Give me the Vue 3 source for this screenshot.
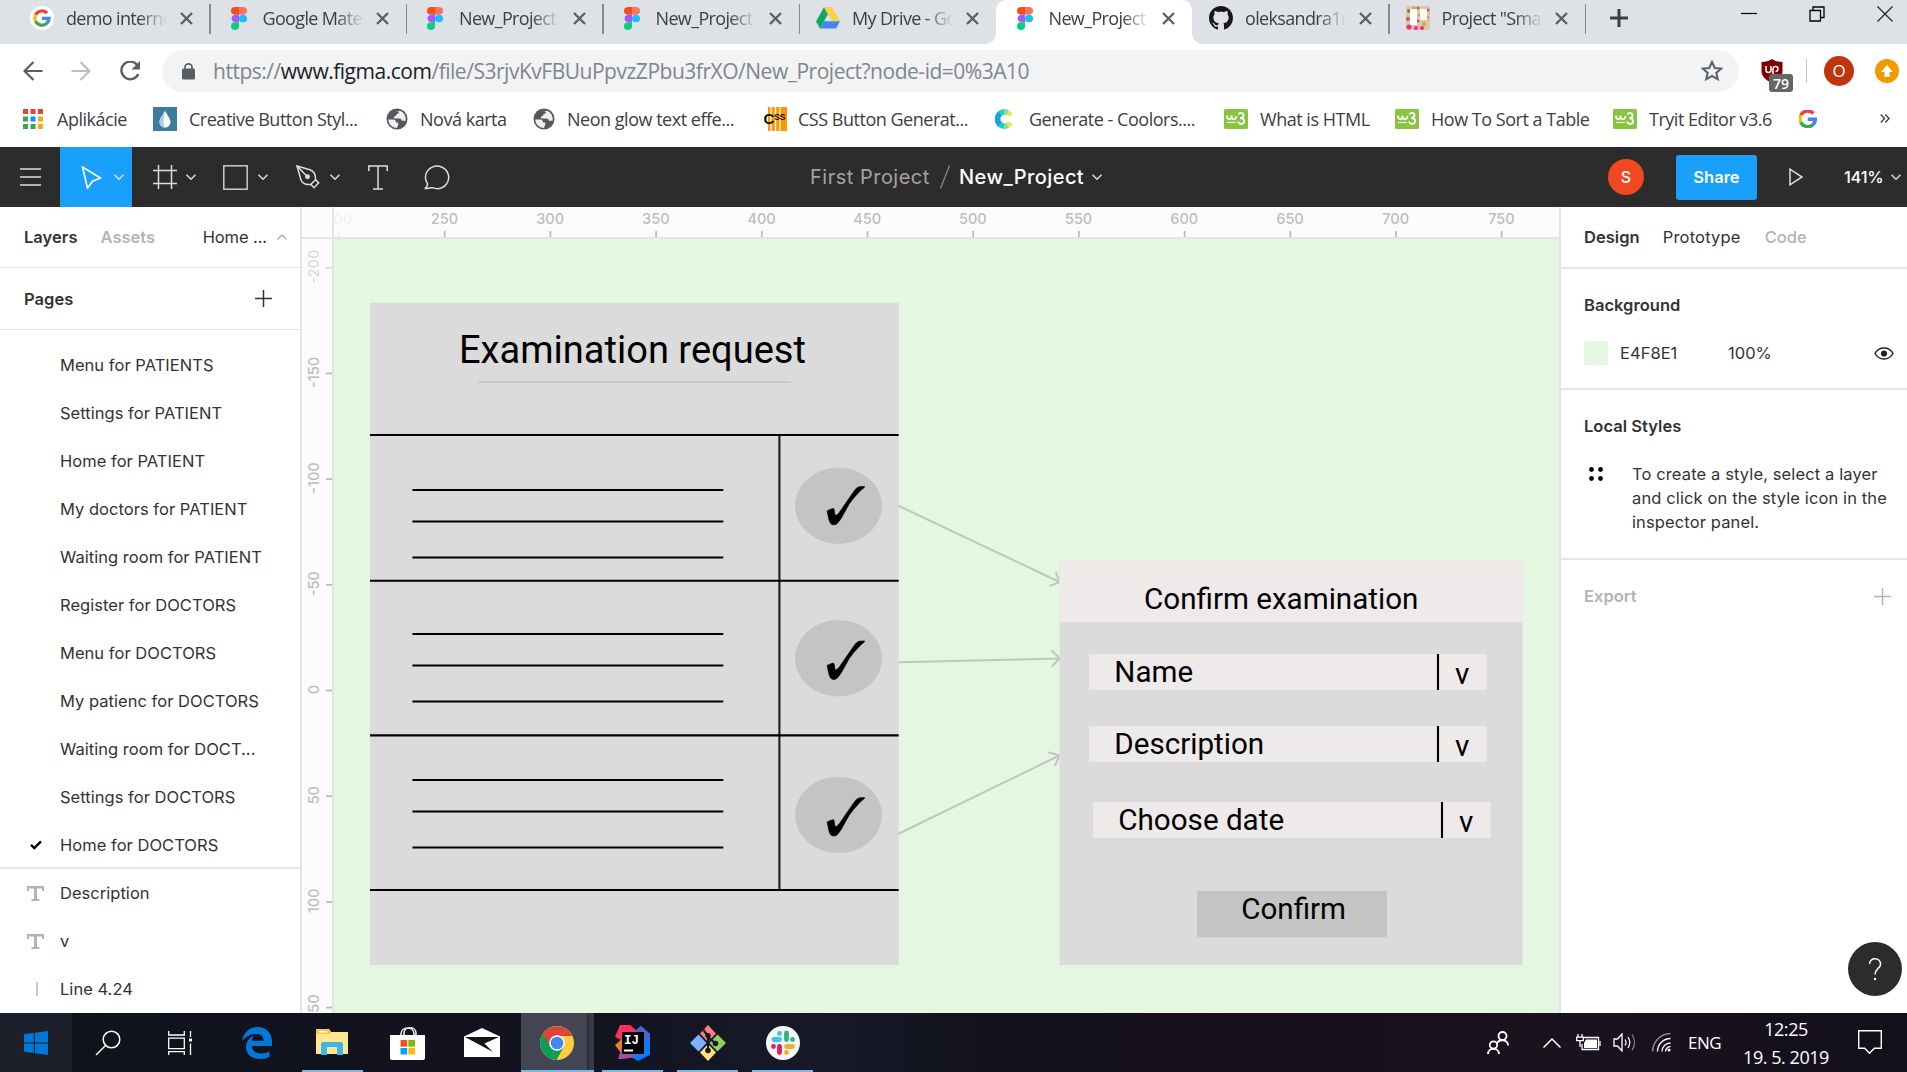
<script setup>
const tabs = [
  { icon: 'google', title: 'demo internetu' },
  { icon: 'figma', title: 'Google Material' },
  { icon: 'figma', title: 'New_Project – F' },
  { icon: 'figma', title: 'New_Project – F' },
  { icon: 'drive', title: 'My Drive - Goo' },
  { icon: 'figma', title: 'New_Project – F', active: true },
  { icon: 'github', title: 'oleksandra1na' },
  { icon: 'trello', title: 'Project "Smart' },
]

const bookmarks = [
  { icon: 'apps', label: 'Aplikácie', width: 130, gap: 34 },
  { icon: 'drop', label: 'Creative Button Styl...', width: 233, gap: 36 },
  { icon: 'globe', label: 'Nová karta', width: 147, gap: 34 },
  { icon: 'globe', label: 'Neon glow text effe...', width: 231, gap: 34 },
  { icon: 'css', label: 'CSS Button Generat...', width: 231, gap: 34 },
  { icon: 'coolors', label: 'Generate - Coolors....', width: 229, gap: 34 },
  { icon: 'w3', label: 'What is HTML', width: 171, gap: 36 },
  { icon: 'w3', label: 'How To Sort a Table', width: 218, gap: 36 },
  { icon: 'w3', label: 'Tryit Editor v3.6', width: 186, gap: 36 },
  { icon: 'google', label: '', width: 60, gap: 24 },
]

const pages = [
  'Menu for PATIENTS',
  'Settings for PATIENT',
  'Home for PATIENT',
  'My doctors for PATIENT',
  'Waiting room for PATIENT',
  'Register for DOCTORS',
  'Menu for DOCTORS',
  'My patienc for DOCTORS',
  'Waiting room for DOCT...',
  'Settings for DOCTORS',
  'Home for DOCTORS',
]

const layers = [
  { kind: 'text', name: 'Description' },
  { kind: 'text', name: 'v' },
  { kind: 'line', name: 'Line 4.24' },
]

const rulerStep = 105.7
const hTicks = [200, 250, 300, 350, 400, 450, 500, 550, 600, 650, 700, 750].map((value, i) => ({
  value: i === 0 ? '00' : value,
  x: 339 + i * rulerStep,
  shift: i === 0 ? 4 : -0.3,
  opacity: i === 0 ? 0.18 : 1,
}))
const vTicks = [-200, -150, -100, -50, 0, 50, 100, 150].map((value, i) => ({
  value,
  y: 267.7 + i * rulerStep,
  opacity: i === 0 ? 0.55 : 1,
}))

const requestRows = [
  { lines: [490, 521.5, 557.5], cy: 505.7 },
  { lines: [634, 665.5, 701.5], cy: 658.3 },
  { lines: [780, 811.5, 847.5], cy: 814.9 },
]
const checkOffset = [0, 2, 2]
const dividers = [435, 580.8, 735.4, 890]

const fields = [
  { label: 'Name', x: 1089, y: 654 },
  { label: 'Description', x: 1089, y: 726 },
  { label: 'Choose date', x: 1093, y: 802 },
]

const apps = ['edge', 'explorer', 'store', 'mail', 'chrome', 'idea', 'git', 'slack']
const running = ['explorer', 'chrome', 'idea', 'git', 'slack']
</script>

<template>
  <div class="screen">
    <header class="tabstrip">
      <div v-for="(tab, i) in tabs" :key="i" class="tab" :class="{ active: tab.active, plain: i === 4 }">
        <span class="favicon">
          <svg v-if="tab.icon === 'google'" width="24" height="24" viewBox="0 0 24 24">
            <circle cx="12" cy="12" r="12" fill="#fff" />
            <g fill="none" stroke-width="3.2">
              <path d="M17.2 7.2A7.2 7.2 0 0 0 5.6 8.8" stroke="#ea4335" />
              <path d="M5.6 8.7a7.2 7.2 0 0 0 0 6.6" stroke="#fbbc05" />
              <path d="M5.6 15.2a7.2 7.2 0 0 0 11.2 2.2" stroke="#34a853" />
              <path d="M16.6 17.5a7.2 7.2 0 0 0 2.5-5.1H12" stroke="#4285f4" />
            </g>
          </svg>
          <svg v-else-if="tab.icon === 'figma'" class="figma" width="16" height="23" viewBox="0 0 16 23">
            <path d="M8 0H4a4 3.85 0 0 0 0 7.7h4z" fill="#f24e1e" />
            <path d="M8 0h4a4 3.85 0 0 1 0 7.7H8z" fill="#ff7262" />
            <path d="M8 7.7H4a4 3.85 0 0 0 0 7.6h4z" fill="#a259ff" />
            <ellipse cx="12" cy="11.5" rx="4" ry="3.85" fill="#1abcfe" />
            <path d="M4 15.3h4v3.8a4 3.85 0 1 1-4-3.8z" fill="#0acf83" />
          </svg>
          <svg v-else-if="tab.icon === 'drive'" width="24" height="22" viewBox="0 0 24 22">
            <path d="M8 0L0 14.5 4 21.5 12 7.2z" fill="#11a861" />
            <path d="M8 0h8l8 14.3h-8z" fill="#ffcf48" />
            <path d="M8 14.3h16l-4 7.2H4z" fill="#4285f4" />
          </svg>
          <svg v-else-if="tab.icon === 'github'" width="24" height="24" viewBox="0 0 16 16">
            <path fill="#191717" d="M8 0C3.58 0 0 3.58 0 8c0 3.54 2.29 6.53 5.47 7.59.4.07.55-.17.55-.38 0-.19-.01-.82-.01-1.49-2.01.37-2.53-.49-2.69-.94-.09-.23-.48-.94-.82-1.13-.28-.15-.68-.52-.01-.53.63-.01 1.08.58 1.23.82.72 1.21 1.87.87 2.33.66.07-.52.28-.87.51-1.07-1.78-.2-3.64-.89-3.64-3.95 0-.87.31-1.59.82-2.15-.08-.2-.36-1.02.08-2.12 0 0 .67-.21 2.2.82.64-.18 1.32-.27 2-.27s1.36.09 2 .27c1.53-1.04 2.2-.82 2.2-.82.44 1.1.16 1.92.08 2.12.51.56.82 1.27.82 2.15 0 3.07-1.87 3.75-3.65 3.95.29.25.54.73.54 1.48 0 1.07-.01 1.93-.01 2.2 0 .21.15.46.55.38A8.01 8.01 0 0 0 16 8c0-4.42-3.58-8-8-8z" />
          </svg>
          <svg v-else width="24" height="24" viewBox="0 0 24 24">
            <rect width="24" height="24" rx="3" fill="#dcc7ac" />
            <g fill="#c0603a"><circle cx="3" cy="5" r="2" /><circle cx="2" cy="13" r="2" /><circle cx="22" cy="4" r="1.6" /><circle cx="12" cy="2" r="1.5" /><circle cx="12" cy="15" r="1.5" /></g>
            <g fill="#d9a441"><circle cx="8" cy="2" r="1.7" /><circle cx="18" cy="18" r="2" /><circle cx="13" cy="9" r="1.5" /><circle cx="22" cy="11" r="1.6" /></g>
            <g fill="#ee2a8c"><circle cx="3" cy="21" r="2.5" /><circle cx="10" cy="22" r="2" /><circle cx="16" cy="22" r="2" /></g>
            <rect x="4" y="3" width="7" height="16" fill="#fff" />
            <rect x="14" y="3" width="7" height="11" fill="#fff" />
          </svg>
        </span>
        <span class="tab-title">{{ tab.title }}</span>
        <svg class="tab-close" width="13" height="13" viewBox="0 0 13 13"><path d="M1 1l11 11M12 1L1 12" stroke="#5a5e63" stroke-width="2.3" /></svg>
      </div>
      <svg class="new-tab" width="18" height="18" viewBox="0 0 18 18"><path d="M9 0v18M0 9h18" stroke="#3c4043" stroke-width="3" /></svg>
      <div class="window-buttons">
        <svg width="16" height="16" viewBox="0 0 16 16"><path d="M0 7.500h16" stroke="#000" stroke-width="1.200" /></svg>
        <svg width="16" height="16" viewBox="0 0 16 16" fill="none" stroke="#000" stroke-width="1.3"><path d="M1 4.5h10.5V15H1zM4 4.5V1h11v10.500h-3.500" /></svg>
        <svg width="16" height="16" viewBox="0 0 16 16"><path d="M0.500 0.500l15 15M15.500 0.500l-15 15" stroke="#222" stroke-width="1.200" /></svg>
      </div>
    </header>

    <div class="addressbar">
      <div class="nav-buttons">
        <svg width="20" height="20" viewBox="0 0 20 20" fill="none" stroke="#5a5e63" stroke-width="2.2"><path d="M19.500 10H2M10.500 1L1.500 10l9 9" /></svg>
        <svg width="20" height="20" viewBox="0 0 20 20" fill="none" stroke="#bcbec1" stroke-width="2.2"><path d="M0.500 10H18M9.500 1l9 9-9 9" /></svg>
        <svg width="22" height="20" viewBox="0 0 22 20"><path d="M18.300 4.200A8.800 8.800 0 1 0 19.300 13" fill="none" stroke="#5a5e63" stroke-width="2.400" /><path d="M21 0v8.500h-8.500z" fill="#5a5e63" /></svg>
      </div>
      <div class="omnibox">
        <svg width="13" height="17" viewBox="0 0 13 17"><rect y="5.500" width="13" height="11" rx="1.500" fill="#5a5e63" /><path d="M3 6.500V4.200a3.500 3.300 0 0 1 7 0v2.300" fill="none" stroke="#5a5e63" stroke-width="1.700" /></svg>
        <span class="url">https://<b>www.figma.com</b>/file/S3rjvKvFBUuPpvzZPbu3frXO/New_Project?node-id=0%3A10</span>
        <svg class="star" width="22" height="22" viewBox="0 0 22 22"><path d="M11 2l2.700 6 6.500.600-4.900 4.300 1.500 6.400L11 15.900l-5.800 3.400 1.500-6.400-4.900-4.300 6.500-.600z" fill="none" stroke="#5a5e63" stroke-width="2" /></svg>
      </div>
      <div class="extensions">
        <span class="ublock">
          <svg width="22" height="24" viewBox="0 0 22 24"><path d="M11 0c3 2.200 6 2.700 10.500 2.900v8.600c0 6-4 9.500-10.500 12.500C4.500 21 0.500 17.500 0.500 11.500V2.900C5 2.700 8 2.200 11 0z" fill="#800000" /><path d="M5 7v4a2.500 2.500 0 0 0 5 0V7M12 16V9.500a2.500 2.500 0 1 1 2.500 3" fill="none" stroke="#fff" stroke-width="1.500" /></svg>
          <span class="badge">79</span>
        </span>
        <i class="ext-sep"></i>
        <span class="profile">O</span>
        <svg class="update" width="24" height="24" viewBox="0 0 24 24"><circle cx="12" cy="12" r="12" fill="#f29900" /><path d="M12 6l6 7h-3.500v5h-5v-5H6z" fill="#fff" /></svg>
      </div>
    </div>

    <nav class="bookmarks">
      <div v-for="(b, i) in bookmarks" :key="i" class="bookmark" :style="{ width: b.width + 'px' }">
        <span class="bm-icon" :style="{ width: b.gap + 'px' }">
          <svg v-if="b.icon === 'apps'" width="20" height="20" viewBox="0 0 20 20">
            <path d="M0 0h5v5H0zM7.500 0h5v5h-5zM15 0h5v5h-5z" fill="#ea4335" />
            <path d="M0 7.500h5v5H0zM0 15h5v5H0zM7.500 15h5v5h-5z" fill="#34a853" />
            <path d="M7.500 7.500h5v5h-5z" fill="#1a8cff" />
            <path d="M15 7.500h5v5h-5zM15 15h5v5h-5z" fill="#fbab05" />
          </svg>
          <svg v-else-if="b.icon === 'drop'" width="24" height="24" viewBox="0 0 24 24">
            <rect width="24" height="24" fill="#3d7c9c" /><path d="M12 4c3 5 5.500 8 5.500 11a5.500 5.500 0 0 1-11 0c0-3 2.500-6 5.500-11z" fill="#fff" /><path d="M12 4c-3 5-5.500 8-5.500 11a5.500 5.500 0 0 0 5 5.500c-2-5-.5-9 .5-16.500z" fill="#a8cfe2" />
          </svg>
          <svg v-else-if="b.icon === 'globe'" width="22" height="22" viewBox="0 0 22 22">
            <circle cx="11" cy="11" r="10.500" fill="#55595e" />
            <path d="M2.300 11.500H7c2 0 3 1.200 3 3h2.200v2.300c0 1-1 1.200-1 2.200v1C6 20 2.500 16 2.300 11.500zM9.500 3.500h3.200c.3 1.800-.7 2.500-2.300 2.800-.2 1.500-.8 2.200-2.400 2.200v2h5.500c1.500 0 2.300 1 2.300 2.300h3.700A8.800 8.800 0 0 0 14 2.700z" fill="#fff" opacity=".9" />
          </svg>
          <svg v-else-if="b.icon === 'css'" width="23" height="24" viewBox="0 0 23 24">
            <path d="M4 0h19v24H4z" fill="#ff9800" /><path d="M7 0v24M11.500 0v24M16 0v24" stroke="#fff" stroke-width="1.300" />
            <text x="-0.500" y="17" font-family="Liberation Sans" font-weight="bold" font-size="15" fill="#111">C</text>
            <text x="10" y="12.500" font-family="Liberation Sans" font-weight="bold" font-size="9" fill="#111">SS</text>
          </svg>
          <svg v-else-if="b.icon === 'coolors'" width="19" height="20" viewBox="0 0 19 20">
            <g fill="none" stroke-width="5.500"><path d="M6 16.200A7 7.200 0 0 1 6 3.800" stroke="#12a5e8" /><path d="M5 4.600A7 7.200 0 0 1 9.500 2.800M5 15.400a7 7.200 0 0 0 4.500 1.800" stroke="#1fcfc0" /><path d="M9.300 2.800a7 7 0 0 1 3.400.9M9.300 17.200a7 7 0 0 0 3.400-.9" stroke="#7fe08a" /><path d="M12.500 3.600a7 7 0 0 1 3 2.900M12.500 16.400a7 7 0 0 0 3-2.900" stroke="#dcec55" /></g>
          </svg>
          <svg v-else-if="b.icon === 'w3'" width="24" height="20" viewBox="0 0 24 20">
            <rect width="24" height="20" rx="1.500" fill="#86c540" /><path d="M3 6.500c0 5 4.500 5 4.500 0 0 5 4.500 5 5 .5M14.500 5.500c1-2.500 5.500-2 5 1 0 2-2 2.500-3.500 2.500 2.500 0 4 1 4 3.300 0 3.500-5 3.500-6 .2" fill="none" stroke="#fff" stroke-width="1.800" /><path d="M3 13.500h9" stroke="#e6f5d6" stroke-width="1.200" />
          </svg>
          <svg v-else width="18" height="18" viewBox="4 4 16.500 16.500">
            <g fill="none" stroke-width="3.200"><path d="M17.200 7.200A7.200 7.200 0 0 0 5.600 8.800" stroke="#ea4335" /><path d="M5.600 8.700a7.200 7.200 0 0 0 0 6.600" stroke="#fbbc05" /><path d="M5.600 15.200a7.200 7.200 0 0 0 11.200 2.200" stroke="#34a853" /><path d="M16.600 17.500a7.200 7.200 0 0 0 2.500-5.100H12" stroke="#4285f4" /></g>
          </svg>
        </span>
        <span>{{ b.label }}</span>
      </div>
      <svg class="more" width="10" height="9" viewBox="0 0 10 9"><path d="M0.800 0.500l3.700 4-3.700 4M5.300 0.500l3.700 4-3.700 4" fill="none" stroke="#44484c" stroke-width="1.500" /></svg>
    </nav>

    <div class="toolbar">
      <span class="tool menu"><svg width="21" height="18" viewBox="0 0 21 18"><path d="M0 1h21M0 9h21M0 17h21" stroke="#ddd" stroke-width="1.400" /></svg></span>
      <span class="tool move">
        <svg class="glyph" width="21" height="23" viewBox="0 0 21 23"><path d="M1.500 1l18 11-8 3.200-5 7z" fill="none" stroke="#fff" stroke-width="1.600" /></svg>
        <svg class="chev" width="10" height="6" viewBox="0 0 10 6"><path d="M0.500 0.800L5 5.200 9.500 0.800" /></svg>
      </span>
      <span class="tool">
        <svg class="glyph" width="24" height="24" viewBox="0 0 24 24"><path d="M5.500 0v24M18.500 0v24M0 5.500h24M0 18.500h24" fill="none" stroke="#ddd" stroke-width="1.500" /></svg>
        <svg class="chev" width="10" height="6" viewBox="0 0 10 6"><path d="M0.500 0.800L5 5.200 9.500 0.800" /></svg>
      </span>
      <span class="tool narrow">
        <svg class="glyph" width="25" height="25" viewBox="0 0 25 25"><rect x=".8" y=".8" width="23.400" height="23.400" fill="none" stroke="#ccc" stroke-width="1.500" /></svg>
        <svg class="chev" width="10" height="6" viewBox="0 0 10 6"><path d="M0.500 0.800L5 5.200 9.500 0.800" /></svg>
      </span>
      <span class="tool narrow">
        <svg class="glyph pen" width="24" height="24" viewBox="0 0 24 24"><g fill="none" stroke="#ddd" stroke-width="1.500"><path d="M1 1l13 3.700c4 1.600 5.800 5 5.500 10l-4.800 4.800c-4 .4-8.200-.6-9.700-4.500z" /><path d="M1 1l9.500 9.700" /><circle cx="11.500" cy="11.700" r="1.700" fill="#ddd" /><path d="M19.300 14.600l3.400 3.200-4.600 4.900-3.200-3.200" /></g></svg>
        <svg class="chev" width="10" height="6" viewBox="0 0 10 6"><path d="M0.500 0.800L5 5.200 9.500 0.800" /></svg>
      </span>
      <span class="tool solo"><svg width="20" height="25" viewBox="0 0 20 25"><path d="M0.800 6V1h18.400v5M10 1v23M5 24h10" fill="none" stroke="#ddd" stroke-width="1.500" /></svg></span>
      <span class="tool comment"><svg width="27" height="25" viewBox="0 0 27 25"><path d="M0.800 23.700c1.800-1 2.700-2.700 2.700-4.900A11.600 11.300 0 1 1 14 23.700c-3 0-4.500-1.200-6.500-.9z" fill="none" stroke="#ddd" stroke-width="1.500" /></svg></span>
      <div class="doc-title">
        <span class="project">First Project</span>
        <svg width="10" height="24" viewBox="0 0 10 24"><path d="M9.500 0.500l-9 23" stroke="#888" stroke-width="1.300" /></svg>
        <span class="file">New_Project</span>
        <svg class="chev" width="10" height="6" viewBox="0 0 10 6"><path d="M0.500 0.800L5 5.200 9.500 0.800" /></svg>
      </div>
      <span class="avatar">S</span>
      <span class="share">Share</span>
      <svg class="play" width="14" height="18" viewBox="0 0 14 18"><path d="M1 1.200v15.600L13 9z" fill="none" stroke="#ddd" stroke-width="1.500" /></svg>
      <span class="zoom">141%</span>
      <svg class="chev" width="10" height="6" viewBox="0 0 10 6"><path d="M0.500 0.800L5 5.200 9.500 0.800" /></svg>
    </div>

    <main class="editor">
      <aside class="left">
        <div class="left-tabs">
          <strong>Layers</strong>
          <strong class="muted">Assets</strong>
          <span class="current-page">Home ...</span>
          <svg width="10" height="6" viewBox="0 0 10 6"><path d="M0.500 5.500L5 1l4.500 4.500" fill="none" stroke="#aaa" stroke-width="1.400" /></svg>
        </div>
        <div class="pages-head">
          <strong>Pages</strong>
          <svg width="17" height="17" viewBox="0 0 17 17"><path d="M8.500 0v17M0 8.500h17" stroke="#333" stroke-width="1.500" /></svg>
        </div>
        <ul class="pages">
          <li v-for="(page, i) in pages" :key="page">
            <span class="row-icon"><svg v-if="i === pages.length - 1" width="12" height="10" viewBox="0 0 12 10"><path d="M1 4.800l3.300 3.200L11 1.300" fill="none" stroke="#000" stroke-width="2.400" /></svg></span>{{ page }}
          </li>
        </ul>
        <ul class="layers">
          <li v-for="layer in layers" :key="layer.name">
            <span class="row-icon">
              <svg v-if="layer.kind === 'text'" width="17" height="15" viewBox="0 0 17 15"><path d="M0 0h17v5h-2V2.500h-5V13h2.500v2h-8v-2H7V2.500H2V5H0z" fill="#b3b3b3" /></svg>
              <svg v-else class="line-icon" width="2" height="14" viewBox="0 0 2 14"><path d="M1 0v14" stroke="#b3b3b3" stroke-width="1.400" /></svg>
            </span>{{ layer.name }}
          </li>
        </ul>
      </aside>

      <svg class="canvas" width="1257" height="806" viewBox="302 207 1257 806">
        <rect x="302" y="207" width="1257" height="806" fill="#e4f8e1" />
        <rect x="302" y="207" width="1257" height="30" fill="#fcfcfc" />
        <rect x="302" y="207" width="30" height="806" fill="#fcfcfc" />
        <path d="M302 238h1257M333 207v806" stroke="#e5e5e5" stroke-width="2" />
        <g class="ruler">
          <g v-for="t in hTicks" :key="'h' + t.x" :opacity="t.opacity">
            <path :d="`M${t.x} 231v6`" stroke="#b8b8b8" stroke-width="1.700" />
            <text :x="t.x + t.shift" y="223.500">{{ t.value }}</text>
          </g>
          <g v-for="t in vTicks" :key="'v' + t.value" :opacity="t.opacity">
            <path :d="`M326 ${t.y}h6`" stroke="#b8b8b8" stroke-width="1.700" />
            <text :transform="`translate(318.500 ${t.y - 1}) rotate(-90)`">{{ t.value }}</text>
          </g>
        </g>

        <g class="request">
          <rect x="370" y="302.700" width="528.700" height="662.300" fill="#dbdbdb" />
          <text x="459" y="362.500" font-size="38.060">Examination request</text>
          <path d="M478 382h313" stroke="#c9c9c9" stroke-width="2" />
          <path v-for="y in dividers" :key="y" :d="`M370 ${y}h528.700`" stroke="#000" stroke-width="2.100" />
          <path d="M779.400 435v454.500" stroke="#000" stroke-opacity=".87" stroke-width="2.100" />
          <g v-for="(row, i) in requestRows" :key="row.cy">
            <path v-for="y in row.lines" :key="y" :d="`M412.400 ${y}h310.900`" stroke="#000" stroke-width="2.100" />
            <ellipse cx="838.500" :cy="row.cy" rx="43.500" ry="38.200" fill="#c4c4c4" />
            <path :transform="`translate(838.500 ${row.cy + checkOffset[i]})`" stroke="#000" stroke-width=".7" d="M26-19.300L20.500-19Q17.500-18 15.500-14.500L1 6.500Q-1.500 10.300-3.200 9.500Q-4.200 8-4 5.500L-4.800 2.800L-7.500 3.400L-11.400 5.200L-9.300 14.800Q-8 18.800-6 19Q-3 19.500-1.500 18Q0.500 16 3 12L10.500-1.500Q15-8 20-13Q23-16.300 25.800-18.300Z" />
          </g>
        </g>

        <g class="arrows" fill="none" stroke="#c4c4c4" stroke-width="2.100" stroke-linecap="round">
          <path d="M899 506l160.500 76M1056 572.700l3.700 9.500-9.500 3.500" />
          <path d="M899 662.200l160.500-3.700M1052 651l7.800 7.300-7.500 7.600" />
          <path d="M899 833.500l160.500-78M1049 752.500l10.600 3-4.300 9.500" />
        </g>

        <g class="confirm">
          <rect x="1059.500" y="561.300" width="463" height="403.700" fill="#dbdbdb" />
          <rect x="1059.500" y="561.300" width="463" height="60.900" fill="#eeeae9" />
          <text x="1144" y="609.400" font-size="29.600">Confirm examination</text>
          <g v-for="f in fields" :key="f.label">
            <rect :x="f.x" :y="f.y" width="397.600" height="36" fill="#eeeae9" />
            <text :x="f.x + 25.300" :y="f.y + 27.600" font-size="29.600">{{ f.label }}</text>
            <path :d="`M${f.x + 349} ${f.y}v36`" stroke="#000" stroke-width="2.100" />
            <text :x="f.x + 366" :y="f.y + 29.600" font-size="29.600">v</text>
          </g>
          <rect x="1197" y="891" width="190" height="46.500" fill="#c4c4c4" />
          <text x="1241.200" y="918.600" font-size="29.600">Confirm</text>
        </g>
      </svg>

      <aside class="right">
        <div class="right-tabs"><strong>Design</strong><span>Prototype</span><strong class="muted code">Code</strong></div>
        <section class="background">
          <strong>Background</strong>
          <div class="fill">
            <i class="swatch"></i><span class="hex">E4F8E1</span><span>100%</span>
            <svg width="20" height="13" viewBox="0 0 20 13"><path d="M1 6.500C5-.7 15-.7 19 6.500 15 13.700 5 13.700 1 6.500z" fill="none" stroke="#222" stroke-width="1.500" /><circle cx="10" cy="6.500" r="3.100" fill="#222" /></svg>
          </div>
        </section>
        <section class="styles">
          <strong>Local Styles</strong>
          <div class="hint">
            <svg width="14" height="14" viewBox="0 0 14 14"><circle cx="2.500" cy="2.500" r="2.400" /><circle cx="11.500" cy="2.500" r="2.400" /><circle cx="2.500" cy="11.500" r="2.400" /><circle cx="11.500" cy="11.500" r="2.400" /></svg>
            <p>To create a style, select a layer<br />and click on the style icon in the<br />inspector panel.</p>
          </div>
        </section>
        <section class="export">
          <strong>Export</strong>
          <svg width="17" height="17" viewBox="0 0 17 17"><path d="M8.500 0v17M0 8.500h17" stroke="#b3b3b3" stroke-width="1.500" /></svg>
        </section>
        <span class="help"><svg width="14" height="23" viewBox="0 0 14 23"><path d="M1.500 6c0-7 11-7 11 .2 0 4.300-5.500 4.300-5.500 10.300" fill="none" stroke="#fff" stroke-width="1.500" /><circle cx="7" cy="21" r="1.200" fill="#fff" /></svg></span>
      </aside>
    </main>

    <footer class="taskbar">
      <span class="sys start"><svg width="24" height="24" viewBox="0 0 24 24"><path d="M0 3.300L9.800 2v9.500H0zM11 1.800L24 0v11.500H11zM0 12.500h9.800V22L0 20.700zM11 12.500h13V24l-13-1.800z" fill="#0078d7" /></svg></span>
      <span class="sys"><svg width="26" height="26" viewBox="0 0 26 26"><circle cx="16.500" cy="9.500" r="8.300" fill="none" stroke="#fff" stroke-width="1.500" /><path d="M10.500 15.500L1 25" stroke="#fff" stroke-width="1.500" /></svg></span>
      <span class="sys"><svg width="24" height="24" viewBox="0 0 24 24" fill="none" stroke="#fff" stroke-width="1.300"><path d="M0.700 0v4h15.600V0M0.700 7.200h15.600v10.500H0.700zM0.700 24v-3.300h15.600V24M22.500 0v6M22.500 12.500V24" /><path d="M21 7.500h3v3h-3z" fill="#fff" stroke="none" /></svg></span>
      <div class="apps">
        <span v-for="app in apps" :key="app" class="app" :class="[app, { running: running.includes(app) }]">
          <svg v-if="app === 'edge'" width="30" height="32" viewBox="0 0 30 32"><path d="M0 14.500C1.500 5 8 0 15.500 0 24 0 30 6 30 14.500V19H10c0 5 4 7.500 9 7.500 3.200 0 6-1 8.500-2.300v5.500C25 31 22 32 18 32 9 32 4 27 4 20c0-5 3-9.500 8-11.500C10.500 10 10 12 10 13.800h11.500C21.500 9.500 19 7 14 7 8.500 7 3.500 9.500 0 14.500z" fill="#0078d7" /></svg>
          <svg v-else-if="app === 'explorer'" width="32" height="27" viewBox="0 0 32 27"><path d="M0 1a1 1 0 0 1 1-1h12l2 3h17v22H0z" fill="#ffe793" /><path d="M0 1a1 1 0 0 1 1-1h12l2 3-1 2H0z" fill="#f7c843" /><path d="M3 2h8v1.500H3z" fill="#fff" /><path d="M5 26V15a2 2 0 0 1 2-2h18a2 2 0 0 1 2 2v11h-6v-8H11v8z" fill="#3fb6e8" /></svg>
          <svg v-else-if="app === 'store'" width="35" height="34" viewBox="0 0 35 34"><path d="M11 10V8c0-8 13-8 13 0v2M14 10V7c0-7 12-7 12 0v3" fill="none" stroke="#eee" stroke-width="1.600" /><path d="M0 9h35v23a2 2 0 0 1-2 2H2a2 2 0 0 1-2-2z" fill="#fff" /><path d="M10.500 14h6.700v6.700h-6.700z" fill="#f25022" /><path d="M18.300 14H25v6.700h-6.700z" fill="#7fba00" /><path d="M10.500 22h6.700v6.500h-6.700z" fill="#00a4ef" /><path d="M18.300 22H25v6.500h-6.700z" fill="#ffb900" /></svg>
          <svg v-else-if="app === 'mail'" width="36" height="29" viewBox="0 0 36 29"><path d="M0 8.500L18 0l18 8.500V29H0z" fill="#fff" /><path d="M1 9h34l-14.500 6.500 8.500 8.500z" fill="#12131d" /></svg>
          <svg v-else-if="app === 'chrome'" width="34" height="34" viewBox="0 0 34 34"><circle cx="17" cy="17" r="17" fill="#ffcd40" /><path d="M2.300 8.500A17 17 0 0 1 31.700 8.700L32.300 10H17L9.500 21z" fill="#db4437" /><path d="M2.500 8.200A17 17 0 0 0 16.500 34l7.500-13.500-12.500 1.500z" fill="#0f9d58" /><circle cx="17" cy="17" r="7.800" fill="#fff" /><circle cx="17" cy="17" r="6.300" fill="#4285f4" /></svg>
          <svg v-else-if="app === 'idea'" width="36" height="36" viewBox="0 0 36 36"><path d="M5 0h10l7 6-5 14L0 12z" fill="#fe315d" /><path d="M0 20l8-7 8 8-8 10z" fill="#f97a12" /><path d="M21 5l5-4 9 8v21l-12 6-9-5z" fill="#087cfa" /><path d="M21 5l5-4 9 8v7L22 12z" fill="#4a65d8" /><path d="M3 34l4-13 14 11-13 2z" fill="#a84fa0" /><rect x="7" y="7" width="22" height="22" fill="#000" /><text x="9" y="18.500" font-family="Liberation Mono" font-weight="bold" font-size="12.500" fill="#fff">IJ</text><path d="M9 25.500h9" stroke="#fff" stroke-width="2" /></svg>
          <svg v-else-if="app === 'git'" width="36" height="36" viewBox="0 0 36 36"><path d="M18 0l8 8.500-8 8.500-8-8.500z" fill="#fd7f7f" /><path d="M8.500 9.500l8 8.500-8 8.500L0 18z" fill="#7eb0ff" /><path d="M27.500 9.500L36 18l-8.500 8.500L19.500 18z" fill="#8fd35e" /><path d="M18 19l8 8.500-8 8.500-8-8.500z" fill="#ffe27c" /><path d="M13.500 5l4.500 6v14M18 12l7 6" fill="none" stroke="#161826" stroke-width="2.200" /><circle cx="18" cy="10.500" r="2.600" fill="#161826" /><circle cx="25.500" cy="18.500" r="2.800" fill="#161826" /><circle cx="18" cy="25.500" r="2.800" fill="#161826" /></svg>
          <svg v-else width="34" height="34" viewBox="0 0 34 34"><circle cx="17" cy="17" r="17" fill="#f6f6f6" /><g stroke-width="4.800" stroke-linecap="round"><path d="M13.500 7.500v0M8 13.500h5.500" stroke="#36c5f0" /><path d="M20.500 7v6.500M26.500 13.500v0" stroke="#2eb67d" /><path d="M20.500 20.500h6M20.500 26.500v0" stroke="#ecb22e" /><path d="M13.500 20.500v6M7.500 20.500v0" stroke="#e01e5a" /></g></svg>
        </span>
      </div>
      <div class="tray">
        <svg class="people" width="22" height="24" viewBox="0 0 22 24" fill="none" stroke="#fff" stroke-width="1.800"><circle cx="15.500" cy="5" r="4" /><circle cx="6.500" cy="14" r="3.700" /><path d="M10 13c0-5 11.500-5.500 11 1.500M1 23c0-7 11-7 11 0" /></svg>
        <svg class="up" width="18" height="10" viewBox="0 0 18 10"><path d="M0.500 9.500L9 1l8.500 8.500" fill="none" stroke="#fff" stroke-width="1.500" /></svg>
        <svg class="battery" width="25" height="17" viewBox="0 0 25 17"><path d="M8 3.500h14.500v12H6V10" fill="none" stroke="#fff" stroke-width="1.300" /><path d="M10 5.500h11v8.500H8V9z" fill="#fff" /><path d="M24 7v5M2 0v3M6 0v3" stroke="#fff" stroke-width="1.300" /><path d="M0.700 3.200h6.600v3.500H0.700zM4 7v6" fill="none" stroke="#fff" stroke-width="1.300" /></svg>
        <svg class="sound" width="23" height="19" viewBox="0 0 23 19" fill="none" stroke="#fff" stroke-width="1.300"><path d="M1 6h3.500L9 1v17l-4.500-5H1zM12 6.500q2 3 0 6M15 4q3.500 5.500 0 11" /><path d="M19 1.500q5 8 0 16" opacity=".45" /></svg>
        <svg class="wifi" width="19" height="19" viewBox="0 0 19 19" fill="none" stroke="#fff" stroke-width="1.300"><path d="M5.500 18.500A13 13 0 0 1 18.500 5.500M10 18.500a8.500 8.500 0 0 1 8.500-8.500M13.500 18.500a5 5 0 0 1 5-5" /><path d="M0.700 18.500A17.800 17.800 0 0 1 18.500 .7" opacity=".6" /><circle cx="17" cy="17" r="1.500" fill="#fff" stroke="none" /></svg>
        <span class="lang">ENG</span>
        <span class="clock"><span>12:25</span><span>19. 5. 2019</span></span>
        <svg class="action" width="24" height="25" viewBox="0 0 24 25"><path d="M0.700 0.700h22.600v17.500h-7l-4.800 5-4.800-5H0.700z" fill="none" stroke="#fff" stroke-width="1.400" /></svg>
      </div>
    </footer>
  </div>
</template>

<style>
body { margin: 0; overflow: hidden; }
</style>

<style scoped>
* { box-sizing: border-box; }
svg { display: block; flex: none; }
.screen { width: 1907px; height: 1072px; display: flex; flex-direction: column; overflow: hidden; background: #fff; font-family: "Open Sans", "Noto Sans", sans-serif; white-space: nowrap; }

.tabstrip { height: 44px; flex: none; display: flex; background: #dee1e6; padding-left: 13px; }
.tab { width: 196.5px; flex: none; height: 44px; display: flex; align-items: center; padding: 0 17px 8px 11px; position: relative; }
.tab::after { content: ""; position: absolute; right: -1px; top: 4px; width: 1.500px; height: 30px; background: #85888c; }
.tab.active::after, .tab.plain::after { display: none; }
.tab.active { background: #fff; border-radius: 10px 10px 0 0; }
.tab.active::before { content: ""; position: absolute; left: -10px; right: -10px; bottom: 0; height: 10px; background: radial-gradient(circle at 0 0, transparent 9.500px, #fff 10px) left / 10px 10px no-repeat, radial-gradient(circle at 100% 0, transparent 9.500px, #fff 10px) right / 10px 10px no-repeat; }
.favicon { width: 42px; padding-left: 6px; flex: none; display: flex; }
.figma { margin: 1px 0 0 4px; }
.tab-title { width: 101px; flex: none; overflow: hidden; font-size: 18px; line-height: 26px; letter-spacing: -0.650px; color: #3c4043; mask-image: linear-gradient(90deg, #000 72%, transparent 100%); }
.tab-close { margin-left: 12.500px; }
.new-tab { margin: 9px 0 0 24.500px; }
.window-buttons { margin-left: auto; display: flex; gap: 52px; padding: 6px 14px 0 0; }

.addressbar { height: 54px; flex: none; display: flex; align-items: center; }
.nav-buttons { width: 162px; flex: none; display: flex; gap: 28px; padding-left: 23px; }
.omnibox { width: 1577px; height: 42px; flex: none; border-radius: 21px; background: #f1f3f4; display: flex; align-items: center; padding: 0 16px 0 20px; }
.url { margin-left: 18px; font-size: 21px; letter-spacing: -0.480px; color: #80868b; }
.url b { font-weight: 400; color: #202124; }
.star { margin-left: auto; }
.extensions { flex: 1; display: flex; align-items: center; padding-left: 22px; }
.ublock { position: relative; width: 31px; height: 24px; }
.badge { position: absolute; left: 8px; top: 15px; width: 24px; height: 18px; border-radius: 3px; background: #666; color: #fff; font-size: 14px; font-weight: 600; line-height: 19px; text-align: center; }
.ext-sep { width: 1px; height: 24px; margin-left: 14px; background: #c4c6c9; }
.profile { width: 30px; height: 30px; margin-left: 17px; border-radius: 50%; background: #bf360c; color: #fff; text-align: center; font-size: 17px; line-height: 30px; }
.update { margin-left: 21px; }

.bookmarks { height: 49px; flex: none; display: flex; align-items: center; padding: 0 0 8px 23px; color: #3c4043; font-size: 18px; letter-spacing: -0.480px; }
.bookmark { display: flex; align-items: center; flex: none; }
.bm-icon { flex: none; }
.more { margin-left: 21px; }

.toolbar { height: 60px; flex: none; display: flex; align-items: center; background: #2c2c2c; color: #fff; font-family: Inter, sans-serif; }
.tool { width: 72px; height: 60px; flex: none; display: flex; align-items: center; justify-content: space-between; padding: 0 8px 0 21px; }
.tool.menu { width: 60px; padding: 0 0 0 20px; }
.tool.menu svg { margin-bottom: 1px; }
.tool.move { background: #18a0fb; }
.tool.narrow { padding-left: 19px; }
.pen { margin-left: 1px; }
.chev { fill: none; stroke: #ddd; stroke-width: 1.500; }
.tool.solo { width: 76px; padding-left: 20px; }
.tool.comment { width: 73px; padding-left: 0; }
.doc-title { display: flex; align-items: center; width: 1111px; flex: none; padding-left: 313px; font-size: 20px; }
.project { color: #a3a3a3; width: 130px; letter-spacing: 0.500px; }
.file { font-weight: 500; width: 133px; margin-left: 9px; letter-spacing: 0.420px; }
.doc-title .chev { margin-left: 0; }
.avatar { width: 36px; height: 36px; border-radius: 50%; background: #f24822; text-align: center; line-height: 36px; font-size: 16px; font-weight: 500; }
.share { width: 81px; height: 45px; margin-left: 32px; border-radius: 3px; background: #18a0fb; text-align: center; line-height: 45px; font-size: 16.500px; font-weight: 600; }
.play { margin-left: 32px; }
.zoom { width: 47px; margin-left: 41px; font-size: 16.500px; font-weight: 500; letter-spacing: -0.300px; }

.editor { height: 806px; flex: none; display: flex; font-family: Inter, sans-serif; font-size: 16.500px; letter-spacing: 0.030px; color: #333; }
strong { font-weight: 600; }
.muted { color: #b3b3b3; }
.left { width: 302px; flex: none; border-right: 2px solid #e5e5e5; display: flex; flex-direction: column; }
.left-tabs { height: 61px; flex: none; display: flex; align-items: center; border-bottom: 1px solid #e5e5e5; padding: 0 13px 0 24px; }
.left-tabs .muted { margin-left: 23px; }
.current-page { margin-left: auto; margin-right: 10px; letter-spacing: -0.100px; }
.pages-head { height: 62px; flex: none; display: flex; align-items: center; justify-content: space-between; border-bottom: 1px solid #e5e5e5; padding: 0 28px 0 24px; }
ul { list-style: none; margin: 0; padding: 0; }
.pages { height: 539px; flex: none; padding-top: 11px; border-bottom: 2px solid #e5e5e5; }
li { height: 48px; display: flex; align-items: center; }
.row-icon { width: 60px; flex: none; padding-left: 27px; }
.pages .row-icon { padding-left: 30px; }
.line-icon { margin-left: 9px; }
.canvas { font-family: Roboto, sans-serif; letter-spacing: 0; }
.canvas .ruler { font-family: Inter, sans-serif; font-size: 14.500px; font-weight: 500; fill: #bcbcbc; text-anchor: middle; }

.right { width: 348px; flex: none; border-left: 2px solid #e5e5e5; position: relative; }
.right-tabs { height: 62px; display: flex; align-items: center; border-bottom: 2px solid #e5e5e5; padding-left: 23px; gap: 23px; }
.right-tabs span { letter-spacing: 0.200px; }
.code { margin-left: 1px; font-weight: 500; letter-spacing: 0; }
.background { height: 121px; border-bottom: 2px solid #e5e5e5; padding: 24px 13px 0 23px; }
section strong { display: block; line-height: 24px; }
.fill { display: flex; align-items: center; height: 24px; margin-top: 24px; }
.swatch { width: 24px; height: 24px; border-radius: 2px; background: #e4f8e1; margin-right: 12px; }
.hex { width: 108px; }
.fill svg { margin-left: auto; }
.styles { height: 170px; border-bottom: 2px solid #e5e5e5; padding: 24px 0 0 23px; }
.hint { display: flex; margin-top: 24px; }
.hint svg { margin: 5px 29px 0 5px; fill: #000; }
.hint p { margin: 0; line-height: 24px; letter-spacing: 0.120px; }
.export { display: flex; justify-content: space-between; align-items: center; padding: 24px 16px 0 23px; color: #b3b3b3; }
.help { position: absolute; right: 5px; bottom: 17px; width: 54px; height: 54px; border-radius: 50%; background: #2c2c2c; display: flex; align-items: center; justify-content: center; }

.taskbar { height: 59px; flex: none; display: flex; background: linear-gradient(90deg, #10121c 0, #12131f 30%, #171928 42%, #12131e 52%, #140f18 60%, #1b1220 80%, #12101a); color: #fff; }
.sys { width: 72px; flex: none; display: flex; align-items: center; justify-content: center; }
.start { background: #1d1f2b; }
.apps { display: flex; padding-left: 3.500px; }
.app { width: 75.100px; height: 59px; display: flex; align-items: center; justify-content: center; position: relative; }
.app.running::after { content: ""; position: absolute; left: 7px; width: 61px; bottom: 0; height: 2px; background: #76b9ed; }
.app.chrome { background: linear-gradient(90deg, transparent 1px, #444552 1px 67px, #2d2e39 67px 69px, #393a46 69px 74px, transparent 74px); }
.app.chrome::after { left: 1px; width: 73px; }
.tray { margin-left: auto; display: flex; align-items: center; padding-right: 25px; }
.up { margin-left: 34px; }
.battery { margin-left: 15px; }
.sound { margin-left: 12px; }
.wifi { margin-left: 16px; }
.lang { width: 35px; margin-left: 17px; font-size: 17px; letter-spacing: -0.500px; }
.clock { width: 92px; margin: 0 26px 0 17px; display: flex; flex-direction: column; text-align: center; font-size: 18px; line-height: 28px; letter-spacing: -0.450px; }
</style>
